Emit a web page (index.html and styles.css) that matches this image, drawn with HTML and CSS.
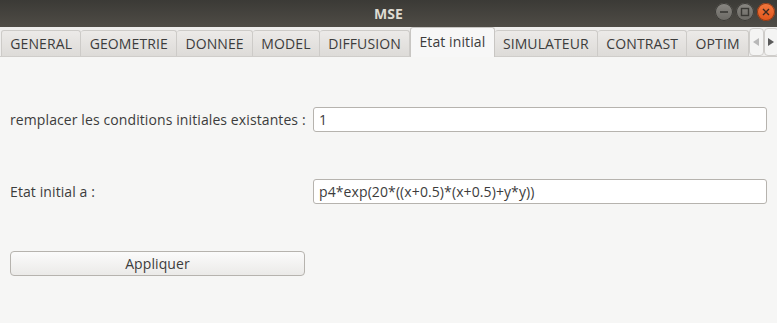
FILE: index.html
```html
<!DOCTYPE html>
<html lang="fr">
<head>
    <meta charset="UTF-8">
    <title>MSE</title>
    <link rel="stylesheet" href="styles.css">
</head>
<body>
    <div class="window">
        <div class="titlebar">
            <span class="title">MSE</span>
            <div class="win-buttons">
                <span class="win-btn"><svg width="10" height="10" viewBox="0 0 10 10"><path d="M1 5h8" stroke="#3a3935" stroke-width="1.6"/></svg></span>
                <span class="win-btn"><svg width="10" height="10" viewBox="0 0 10 10"><rect x="1.5" y="1.5" width="7" height="7" fill="none" stroke="#3a3935" stroke-width="1.4"/></svg></span>
                <span class="win-btn close"><svg width="10" height="10" viewBox="0 0 10 10"><path d="M2 2l6 6M8 2l-6 6" stroke="#3b2a22" stroke-width="1.4"/></svg></span>
            </div>
        </div>
        <div class="tabbar">
            <div class="tabs">
                <span class="tab">GENERAL</span>
                <span class="tab">GEOMETRIE</span>
                <span class="tab">DONNEE</span>
                <span class="tab">MODEL</span>
                <span class="tab">DIFFUSION</span>
                <span class="tab active">Etat initial</span>
                <span class="tab">SIMULATEUR</span>
                <span class="tab">CONTRAST</span>
                <span class="tab">OPTIM</span>
            </div>
            <div class="scrollers">
                <span class="scroll-btn disabled"><svg width="6" height="8" viewBox="0 0 6 8"><path d="M6 0v8L0 4z" fill="#b8b8b8"/></svg></span>
                <span class="scroll-btn"><svg width="6" height="8" viewBox="0 0 6 8"><path d="M0 0v8l6-4z" fill="#5a5a5a"/></svg></span>
            </div>
        </div>
        <div class="content">
            <label class="field-label" for="remplacer">remplacer les conditions initiales existantes :</label>
            <input class="field" type="text" id="remplacer" value="1">
            <label class="field-label" for="etat">Etat initial a :</label>
            <input class="field" type="text" id="etat" value="p4*exp(20*((x+0.5)*(x+0.5)+y*y))">
            <button class="apply">Appliquer</button>
        </div>
    </div>
</body>
</html>
```

FILE: styles.css
```css
html, body {
    margin: 0;
    padding: 0;
}
body {
    font-family: "Open Sans", "Noto Sans", sans-serif;
    font-size: 14px;
    letter-spacing: 0.1px;
    color: #3c3c3c;
    background-color: #f6f6f5;
}
.window {
    width: 777px;
    height: 323px;
    display: flex;
    flex-direction: column;
    overflow: hidden;
}
.titlebar {
    height: 27px;
    flex: none;
    position: relative;
    display: flex;
    align-items: center;
    justify-content: center;
    background: linear-gradient(#3b3a36, #4f4c46);
}
.title {
    color: #dfdbd2;
    font-weight: bold;
    font-size: 14px;
}
.win-buttons {
    position: absolute;
    right: 2px;
    top: 3px;
    display: flex;
    gap: 3px;
}
.win-btn {
    width: 18px;
    height: 18px;
    border-radius: 50%;
    display: flex;
    align-items: center;
    justify-content: center;
    background: linear-gradient(#8a8883, #6a6863);
    box-shadow: inset 0 0 0 1px #3a3935;
}
.win-btn.close {
    background: linear-gradient(#f4793f, #e0541a);
    box-shadow: inset 0 0 0 1px #8a3a18;
}
.tabbar {
    height: 30px;
    flex: none;
    display: flex;
    align-items: flex-end;
    background-color: #efeeed;
    border-bottom: 1px solid #cfcdca;
    box-sizing: border-box;
}
.tabs {
    display: flex;
    align-items: flex-end;
    height: 100%;
    flex: 1;
    padding-left: 1px;
}
.tab {
    height: 26px;
    box-sizing: border-box;
    padding: 0 8.3px;
    display: flex;
    align-items: center;
    white-space: nowrap;
    background: linear-gradient(#eceae8, #dddbd8);
    border: 1px solid #cdcbc8;
    border-bottom: none;
    border-left: none;
    border-radius: 3px 3px 0 0;
}
.tab:first-child {
    border-left: 1px solid #cdcbc8;
}
.tab.active {
    height: 30px;
    background: #f7f7f7;
    border: 1px solid #c8c6c3;
    border-bottom: none;
    margin-bottom: -1px;
    padding-bottom: 2px;
}
.scrollers {
    display: flex;
    height: 100%;
    padding-top: 1px;
    box-sizing: border-box;
}
.scroll-btn {
    width: 13px;
    display: flex;
    align-items: center;
    justify-content: center;
    background: #f4f4f3;
    border: 1px solid #cfcdca;
    border-radius: 4px;
}
.content {
    flex: 1;
    display: grid;
    grid-template-columns: 295px 1fr;
    grid-auto-rows: 25px;
    column-gap: 8px;
    row-gap: 47px;
    padding: 50px 10px 0 10px;
    align-items: center;
}
.field-label {
    white-space: nowrap;
}
.field {
    height: 25px;
    box-sizing: border-box;
    font-family: inherit;
    font-size: 14px;
    letter-spacing: inherit;
    color: #3c3c3c;
    padding: 0 5px;
    background: #ffffff;
    border: 1px solid #b6b3ae;
    border-radius: 3px;
    outline: none;
}
.apply {
    height: 25px;
    font-family: inherit;
    font-size: 14px;
    letter-spacing: inherit;
    color: #3c3c3c;
    background: linear-gradient(#fbfbfb, #ebeae8);
    border: 1px solid #b6b3ae;
    border-radius: 4px;
    padding: 0;
}
```
